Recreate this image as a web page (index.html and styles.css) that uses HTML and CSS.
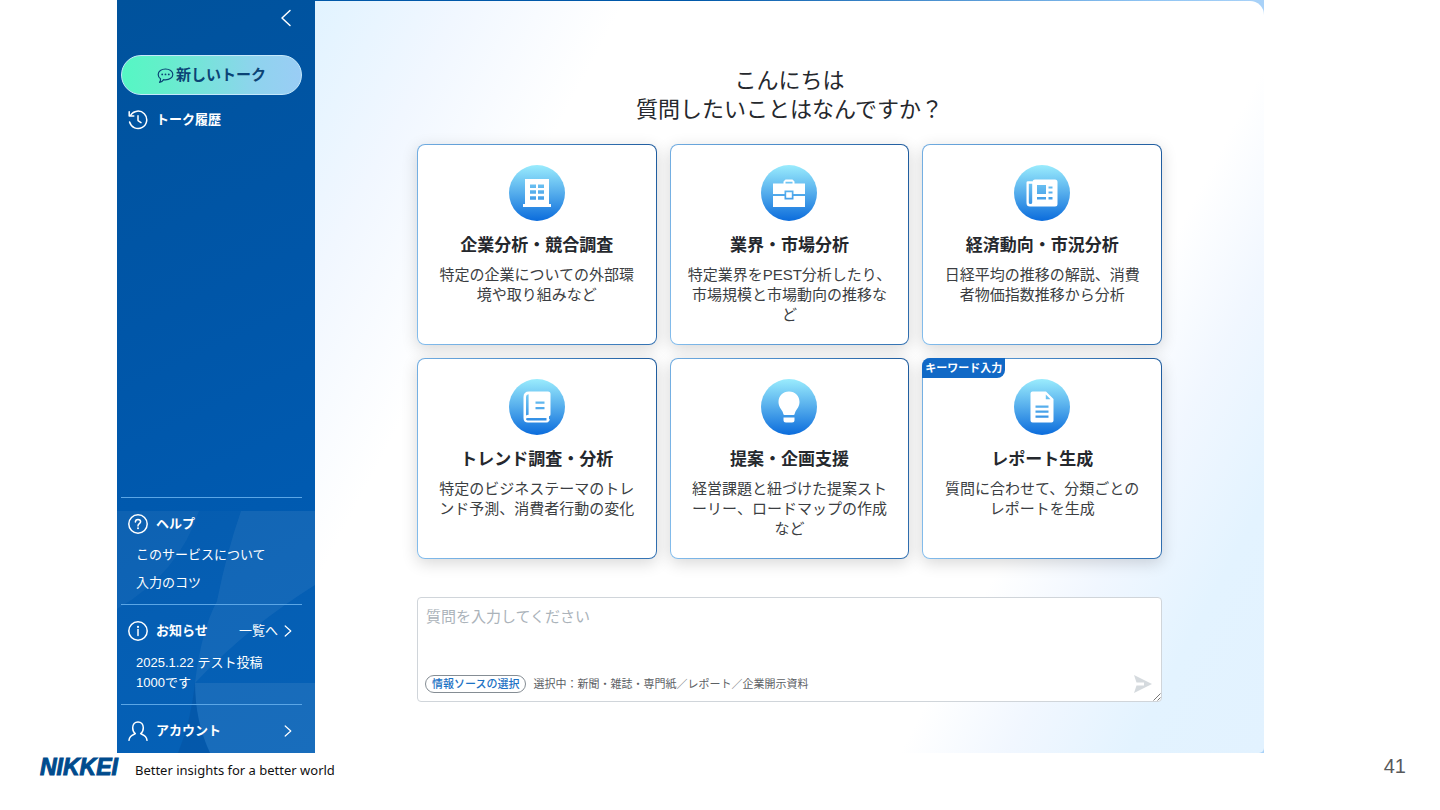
FILE: index.html
```html
<!DOCTYPE html>
<html lang="ja">
<head>
<meta charset="utf-8">
<meta name="viewport" content="width=device-width, initial-scale=1">
<title>NIKKEI</title>
<link rel="stylesheet" href="styles.css">
</head>
<body>
<div class="app">
  <aside class="sidebar">
    <svg class="sidebar-art" viewBox="0 0 198 242" preserveAspectRatio="none" aria-hidden="true">
      <path d="M0 0H198V242H0Z" fill="#fff" fill-opacity=".02"/>
      <path d="M0 0H82Q62 62 0 98Z" fill="#fff" fill-opacity=".04"/>
      <path d="M124 0H198V74Q128 118 78 172Q84 120 100 90Q110 40 124 0Z" fill="#fff" fill-opacity=".06"/>
      <path d="M78 172H198V242H93Q78 210 78 172Z" fill="#fff" fill-opacity=".08"/>
      <path d="M78 172Q78 210 93 242H61Q74 210 78 172Z" fill="#003a80" fill-opacity=".2"/>
    </svg>
    <div class="sidebar-top">
      <button class="icon-button" type="button" aria-label="閉じる">
        <svg width="12" height="18" viewBox="0 0 12 18"><path d="M10 1.500L2 9L10 16.500" class="line"/></svg>
      </button>
    </div>
    <button class="new-talk" type="button">
      <svg width="17" height="17" viewBox="0 0 17 17" aria-hidden="true">
        <path d="M8.500 2C12.500 2 15.800 4.200 15.800 7.400S12.500 12.800 8.500 12.800C7.800 12.800 7.200 12.700 6.600 12.600C5.800 14 4.200 15.200 2.500 15.300C3.400 14.300 3.700 13 3.500 11.700C2 10.700 1.200 9.200 1.200 7.400C1.200 4.200 4.500 2 8.500 2Z" fill="none" stroke="currentColor" stroke-width="1.200" stroke-linejoin="round"/>
        <circle cx="5.200" cy="7.400" r=".9" fill="currentColor"/><circle cx="8.500" cy="7.400" r=".9" fill="currentColor"/><circle cx="11.800" cy="7.400" r=".9" fill="currentColor"/>
      </svg>
      新しいトーク
    </button>
    <button class="side-heading history" type="button">
      <svg width="20" height="20" viewBox="0 0 20 20" aria-hidden="true">
        <path d="M2.600 5.300A8.700 8.700 0 1 1 1.600 12" class="line"/><path d="M1.200 1.800V6H5.800M10 5.800V10.600L13 12.600" class="line"/>
      </svg>
      トーク履歴
    </button>
    <div class="side-bottom">
      <section class="side-section">
        <h2 class="side-heading">
          <svg width="20" height="20" viewBox="0 0 20 20" aria-hidden="true"><circle cx="10" cy="10" r="9.200" class="line"/><path d="M7.400 8C7.400 6.300 8.500 5.400 10 5.400S12.600 6.400 12.600 7.800C12.600 9.700 10 9.700 10 11.900" class="line"/><circle cx="10" cy="14.300" r="1" fill="currentColor"/></svg>
          ヘルプ
        </h2>
        <nav class="side-links">
          <a href="#about">このサービスについて</a>
          <a href="#tips">入力のコツ</a>
        </nav>
      </section>
      <section class="side-section">
        <div class="side-row">
          <h2 class="side-heading">
            <svg width="20" height="20" viewBox="0 0 20 20" aria-hidden="true"><circle cx="10" cy="10" r="9.200" class="line"/><circle cx="10" cy="5.900" r="1.100" fill="currentColor"/><path d="M10 8.600V14.600" class="line"/></svg>
            お知らせ
          </h2>
          <a class="more" href="#news">一覧へ
            <svg width="8" height="12" viewBox="0 0 8 12" aria-hidden="true"><path d="M1.200 1L6.800 6L1.200 11" class="thin"/></svg>
          </a>
        </div>
        <a class="news" href="#post">2025.1.22 テスト投稿<br>1000です</a>
      </section>
      <section class="side-section">
        <a class="side-row" href="#account">
          <span class="side-heading">
            <svg width="20" height="20" viewBox="0 0 20 20" aria-hidden="true"><path d="M1 19.300C1.300 15.500 3.500 14.600 7.300 12.600C5.400 11.300 4.700 9.200 4.700 6.800C4.700 3.300 6.900 .9 10 .9S15.300 3.300 15.300 6.800C15.300 9.200 14.600 11.300 12.700 12.600C16.500 14.600 18.700 15.500 19 19.300" class="line"/></svg>
            アカウント
          </span>
          <svg width="8" height="12" viewBox="0 0 8 12" aria-hidden="true"><path d="M1.200 1L6.800 6L1.200 11" class="thin"/></svg>
        </a>
      </section>
    </div>
  </aside>

  <main class="main">
    <div class="content">
      <h1 class="greeting">こんにちは<br>質問したいことはなんですか？</h1>
      <div class="cards">
        <button class="card" type="button">
          <span class="disc"><svg width="28" height="28" viewBox="0 0 28 28" aria-hidden="true"><path fill-rule="evenodd" fill="#fff" d="M2 0H26V25H28V28H0V25H2ZM7 5.500V9H13V5.500ZM15 5.500V9H21V5.500ZM7 11.300V14.800H13V11.300ZM15 11.300V14.800H21V11.300ZM7 17.200V20.700H13V17.200ZM15 17.200V20.700H21V17.200Z"/></svg></span>
          <strong class="card-title">企業分析・競合調査</strong>
          <span class="card-text">特定の企業についての外部環境や取り組みなど</span>
        </button>
        <button class="card" type="button">
          <span class="disc"><svg width="32" height="28" viewBox="0 0 32 28" aria-hidden="true"><path fill-rule="evenodd" fill="#fff" d="M0 4.500H10.500V2.500L12.500 .5H19.500L21.500 2.500V4.500H32V15H20.500V11.500H11.500V15H0ZM12.500 4.500H19.500V2.800H12.500ZM0 17H11.500V20.500H20.500V17H32V28H0ZM13.200 13.200H18.800V18.800H13.200Z"/></svg></span>
          <strong class="card-title">業界・市場分析</strong>
          <span class="card-text">特定業界をPEST分析したり、市場規模と市場動向の推移など</span>
        </button>
        <button class="card" type="button">
          <span class="disc"><svg width="32" height="28" viewBox="0 0 32 28" aria-hidden="true"><path fill-rule="evenodd" fill="#fff" d="M9 .5H29Q31.500 .5 31.500 3V25Q31.500 27.500 29 27.500H4Q.5 27.500 .5 24V3.500Q.5 2.200 2 2.200H6.500V3Q6.500 .5 9 .5ZM2.800 4.800V23.500Q2.800 25 4.500 25Q6.200 25 6.200 23.500V4.800ZM11 6V15H20V6ZM22.500 7.500V9.500H26.500V7.500ZM22.500 12.500V14.500H26.500V12.500ZM11 18V20.500H20V18ZM22.500 18V20.500H26.500V18Z"/></svg></span>
          <strong class="card-title">経済動向・市況分析</strong>
          <span class="card-text">日経平均の推移の解説、消費者物価指数推移から分析</span>
        </button>
        <button class="card" type="button">
          <span class="disc"><svg width="28" height="32" viewBox="0 0 28 32" aria-hidden="true"><path fill-rule="evenodd" fill="#fff" d="M6 .5H25Q27.500 .5 27.500 3V23.500Q27.500 25 26 25.300V28Q27.500 28.200 26 30Q25.300 31.500 23.500 31.500H5Q.5 31.500 .5 27V6Q.5 .5 6 .5ZM3 6V24.500Q4 23.800 5.600 23.800V3.200Q3 3.500 3 6ZM12.500 10.500V12.800H21.500V10.500ZM12.500 16V18.300H21.500V16ZM4.500 27Q3 27 3 28T4.500 29.500H23.500V27Z"/></svg></span>
          <strong class="card-title">トレンド調査・分析</strong>
          <span class="card-text">特定のビジネステーマのトレンド予測、消費者行動の変化</span>
        </button>
        <button class="card" type="button">
          <span class="disc"><svg width="24" height="32" viewBox="0 0 24 32" aria-hidden="true"><path fill="#fff" d="M12 .5C18.200 .5 22.500 5 22.500 11C22.500 15.500 20 17.800 18.500 20.500C17.600 22 18 24 16.500 24H7.500C6 24 6.400 22 5.500 20.500C4 17.800 1.500 15.500 1.500 11C1.500 5 5.800 .5 12 .5ZM6.500 26.500H17.500V29Q17.500 31.500 15 31.500H9Q6.500 31.500 6.500 29Z"/></svg></span>
          <strong class="card-title">提案・企画支援</strong>
          <span class="card-text">経営課題と紐づけた提案ストーリー、ロードマップの作成など</span>
        </button>
        <button class="card" type="button">
          <span class="badge">キーワード入力</span>
          <span class="disc"><svg width="24" height="32" viewBox="0 0 24 32" aria-hidden="true"><path fill-rule="evenodd" fill="#fff" d="M2.500 .5H16L23.500 8V29.500Q23.500 31.500 21.500 31.500H2.500Q.5 31.500 .5 29.500V2.500Q.5 .5 2.500 .5ZM15.800 3.500V8.200H20.500ZM5.500 14.500V16.700H18.500V14.500ZM5.500 19.500V21.700H18.500V19.500ZM5.500 24.500V26.700H18.500V24.500Z"/></svg></span>
          <strong class="card-title">レポート生成</strong>
          <span class="card-text">質問に合わせて、分類ごとのレポートを生成</span>
        </button>
      </div>
      <form class="ask">
        <textarea class="ask-input" aria-label="質問" placeholder="質問を入力してください"></textarea>
        <div class="ask-bar">
          <button class="pill" type="button">情報ソースの選択</button>
          <span class="sources">選択中：新聞・雑誌・専門紙／レポート／企業開示資料</span>
          <button class="send" type="button" aria-label="送信">
            <svg width="18" height="18" viewBox="0 0 18 18"><path d="M0 0L18 9L0 18L2.500 10.500H10V7.500H2.500Z" fill="#d5dade"/></svg>
          </button>
        </div>
        <svg class="grip" width="8" height="8" viewBox="0 0 8 8" aria-hidden="true"><path d="M.5 7.500L7.500 .5M4.500 7.500L7.500 4.500" stroke="#777" fill="none"/></svg>
      </form>
    </div>
  </main>
</div>
<footer class="footer">
  <span class="logo">NIKKEI</span>
  <span class="tagline">Better insights for a better world</span>
  <span class="page-number">41</span>
</footer>
</body>
</html>
```

FILE: styles.css
```css
* { box-sizing: border-box; }

body {
  margin: 0;
  min-height: 100vh;
  display: flex;
  flex-direction: column;
  background: #fff;
  color: #25282d;
  font-family: "Liberation Sans", "Noto Sans CJK JP", sans-serif;
}

button, textarea { font-family: inherit; color: inherit; }
button { margin: 0; padding: 0; border: 0; background: none; }
a { color: inherit; text-decoration: none; }
svg { flex: none; display: block; }

.line { fill: none; stroke: currentColor; stroke-width: 1.5; stroke-linecap: round; stroke-linejoin: round; }
.thin { fill: none; stroke: currentColor; stroke-width: 1.2; stroke-linecap: round; stroke-linejoin: round; }

.app {
  flex: 1;
  display: flex;
  margin: 0 176px 0 117px;
  background: linear-gradient(90deg, #00529f 0%, #0058a9 17%, #0058a9 50%, #8fc4f3 90%, #a9d2f8 100%);
}

.sidebar {
  position: relative;
  flex: none;
  width: 198px;
  padding: 0 13px 0 4px;
  display: flex;
  flex-direction: column;
  color: #fff;
  background: linear-gradient(155deg, #00529c 0%, #0056a8 40%, #005bb2 75%, #005eb6 100%);
}

.sidebar > * { position: relative; }

.sidebar .sidebar-art {
  position: absolute;
  left: 0;
  bottom: 0;
  width: 100%;
  height: 242px;
}

.sidebar-top {
  display: flex;
  justify-content: flex-end;
  padding: 9px 10px 0 0;
  height: 55px;
}

.icon-button { height: 18px; }

.new-talk {
  height: 40px;
  display: flex;
  align-items: center;
  justify-content: center;
  gap: 2px;
  border: 1px solid #c5e8fb;
  border-radius: 20px;
  background: linear-gradient(90deg, #55f7c4 0%, #62f0c9 20%, #8fd3ee 75%, #9acdf5 100%);
  color: #0b4375;
  font-size: 15px;
  line-height: 20px;
  font-weight: 700;
}

.side-heading {
  margin: 0;
  display: flex;
  align-items: center;
  gap: 8px;
  padding-left: 7px;
  font-size: 13px;
  line-height: 20px;
  font-weight: 700;
}

.history { margin-top: 15px; }
.side-bottom { margin-top: auto; }

.side-section {
  border-top: 1px solid #5ba6e6;
  padding: 16px 0 12px;
}

.side-section:first-child { padding-bottom: 7px; }
.side-section:nth-child(2) { padding-bottom: 11px; }

.side-links {
  display: flex;
  flex-direction: column;
  margin-top: 7px;
  padding-left: 15px;
  font-size: 13px;
  line-height: 28px;
}

.side-row {
  display: flex;
  align-items: center;
  justify-content: space-between;
  padding-right: 10px;
}

.more { display: flex; align-items: center; gap: 6px; font-size: 13px; line-height: 20px; }

.news {
  display: block;
  margin: 12px 0 0 15px;
  font-size: 13px;
  line-height: 20px;
}

.main {
  flex: 1;
  min-width: 0;
  margin-top: 1px;
  padding: 65px 24px 48px;
  border-radius: 0 14px 5px 0;
  background: linear-gradient(118deg, #e1f3ff 0%, #f1f7ff 11%, #fff 23%, #fff 73%, #f1f7ff 81%, #e3f3ff 90%, #e2f2ff 100%);
}

.content { max-width: 745px; margin: 0 auto; }

.greeting {
  margin: 0 0 20px;
  text-align: center;
  font-size: 22px;
  line-height: 29px;
  font-weight: 400;
}

.cards {
  display: grid;
  grid-template-columns: repeat(3, 1fr);
  gap: 13px;
}

.card {
  position: relative;
  min-height: 201px;
  padding: 20px 15px 18px;
  display: flex;
  flex-direction: column;
  align-items: center;
  border: 1px solid transparent;
  border-radius: 8px;
  background:
    linear-gradient(#fff, #fff) padding-box,
    linear-gradient(75deg, #84bdec 0%, #4c8cca 55%, #1f5c9e 100%) border-box;
  box-shadow: 0 4px 16px rgba(0, 0, 0, .16);
  text-align: center;
}

.disc {
  width: 56px;
  height: 56px;
  display: flex;
  align-items: center;
  justify-content: center;
  border-radius: 50%;
  background: linear-gradient(180deg, #9aecfd 0%, #55adec 50%, #0b6cdc 100%);
}

.card-title { margin-top: 13px; font-size: 17px; line-height: 24px; }
.card-text { margin-top: 7px; font-size: 15px; line-height: 20px; color: #3b3e42; }

.badge {
  position: absolute;
  top: -1px;
  left: -1px;
  padding: 0 3px;
  border-radius: 8px 0 8px 0;
  background: #1169c6;
  color: #fff;
  font-size: 11px;
  line-height: 20px;
  font-weight: 700;
}

.ask {
  position: relative;
  margin-top: 38px;
  border: 1px solid #d0d5da;
  border-radius: 4px;
  background: #fff;
}

.ask-input {
  display: block;
  width: 100%;
  height: 77px;
  padding: 8px;
  border: 0;
  outline: 0;
  resize: none;
  background: none;
  font-size: 15px;
  line-height: 22px;
}

.ask-input::placeholder { color: #abb3ba; opacity: 1; }

.ask-bar {
  display: flex;
  align-items: center;
  gap: 7px;
  padding: 0 9px 8px 7px;
  font-size: 11px;
  line-height: 16px;
  color: #5c6064;
}

.pill {
  padding: 0 6px;
  border: 1px solid #858d94;
  border-radius: 9px;
  color: #1c72c4;
  font-size: 11px;
  line-height: 16px;
  font-weight: 500;
}

.send { margin-left: auto; }
.grip { position: absolute; right: 0; bottom: 0; }

.footer {
  display: flex;
  align-items: center;
  height: 57px;
  padding: 0 34px 30px 40px;
}

.logo {
  color: #004b8d;
  font-size: 23px;
  line-height: 28px;
  font-weight: 700;
  font-style: italic;
  -webkit-text-stroke: 1px #004b8d;
}

.tagline {
  margin: 6px 0 0 17px;
  color: #111;
  font-family: "Noto Sans", sans-serif;
  font-size: 13px;
}

.page-number { margin-left: auto; color: #58595b; font-size: 20px; }
```
